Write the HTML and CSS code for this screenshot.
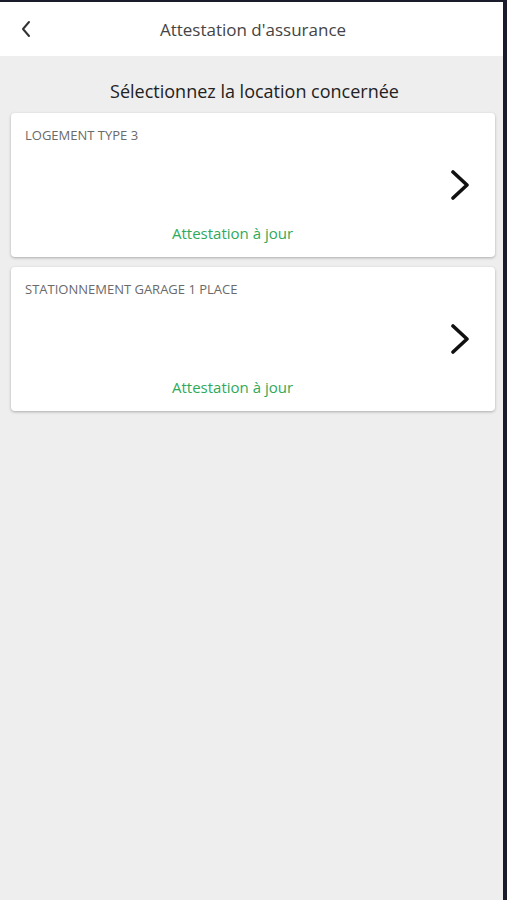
FILE: index.html
```html
<!DOCTYPE html>
<html lang="fr">
<head>
<meta charset="utf-8">
<title>Attestation d'assurance</title>
<link rel="stylesheet" href="styles.css">
</head>
<body>
<div class="frame">
  <div class="screen">
    <header class="topbar">
      <button class="back" aria-label="Retour">
        <svg width="12" height="18" viewBox="0 0 12 18"><path d="M9 2 L3 9 L9 16" fill="none" stroke="#333" stroke-width="2" stroke-linecap="round" stroke-linejoin="round"/></svg>
      </button>
      <h1 class="title">Attestation d'assurance</h1>
    </header>
    <main class="content">
      <h2 class="subtitle">Sélectionnez la location concernée</h2>
      <div class="list">
        <a class="card">
          <div class="card-main">
            <div class="label">LOGEMENT TYPE 3</div>
            <div class="status">Attestation à jour</div>
          </div>
          <div class="card-arrow">
            <svg width="20" height="30" viewBox="0 0 20 30"><path d="M3 2 L17 15 L3 28" fill="none" stroke="#111" stroke-width="3.6" stroke-linecap="round" stroke-linejoin="round"/></svg>
          </div>
        </a>
        <a class="card">
          <div class="card-main">
            <div class="label">STATIONNEMENT GARAGE 1 PLACE</div>
            <div class="status">Attestation à jour</div>
          </div>
          <div class="card-arrow">
            <svg width="20" height="30" viewBox="0 0 20 30"><path d="M3 2 L17 15 L3 28" fill="none" stroke="#111" stroke-width="3.6" stroke-linecap="round" stroke-linejoin="round"/></svg>
          </div>
        </a>
      </div>
    </main>
  </div>
</div>
</body>
</html>
```
FILE: styles.css
```css
* { box-sizing: border-box; }
html, body { margin: 0; padding: 0; height: 100%; }
body {
  font-family: "Open Sans", "Noto Sans", sans-serif;
  background: #1b1c2b;
}
.frame {
  height: 900px;
  padding: 2px 4px 0 0;
  background: #1b1c2b;
}
.screen {
  height: 100%;
  background: #eeeeee;
  display: flex;
  flex-direction: column;
}
.topbar {
  height: 54px;
  background: #ffffff;
  display: flex;
  align-items: center;
  position: relative;
  justify-content: center;
}
.back {
  position: absolute;
  left: 20px;
  top: 18px;
  border: 0;
  background: none;
  padding: 0;
  width: 14px;
  height: 18px;
  display: flex;
}
.title {
  margin: 0;
  font-size: 17px;
  font-weight: 400;
  color: #444;
  padding-left: 3px;
}
.content {
  padding: 23px 8px 0 11px;
}
.subtitle {
  margin: 0 0 10px;
  text-align: center;
  font-size: 18px;
  font-weight: 400;
  color: #222;
  line-height: 24px;
  padding-left: 3px;
}
.list {
  display: flex;
  flex-direction: column;
  gap: 10px;
}
.card {
  display: flex;
  background: #ffffff;
  border-radius: 4px;
  min-height: 144px;
  box-shadow: 0 1px 3px rgba(0,0,0,0.28);
}
.card-main {
  flex: 1;
  display: flex;
  flex-direction: column;
  justify-content: space-between;
  padding: 14px 0 14px 14px;
}
.label {
  font-size: 13px;
  line-height: 16px;
  color: #6a6a6a;
}
.status {
  text-align: center;
  color: #2fa95a;
  font-size: 15px;
  line-height: 20px;
}
.card-arrow {
  width: 55px;
  display: flex;
  align-items: center;
  justify-content: flex-end;
  padding-right: 25px;
}
```
